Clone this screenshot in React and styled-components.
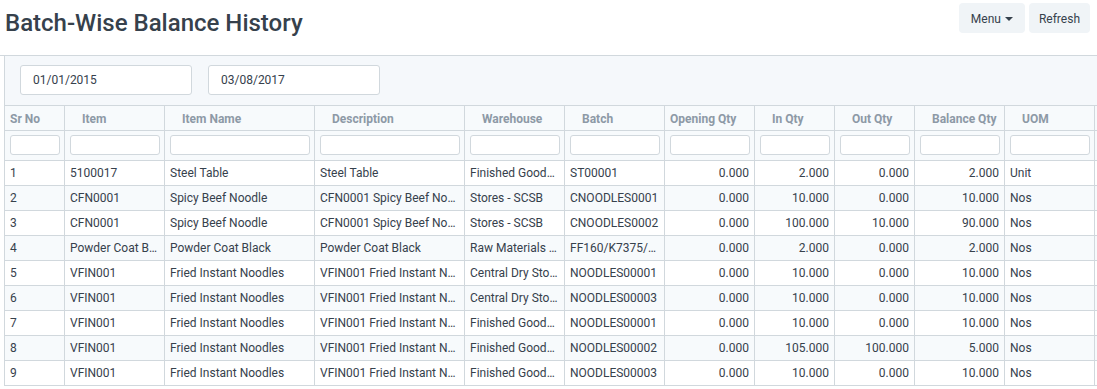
import React from "react";
import styled, { createGlobalStyle } from "styled-components";

const GlobalStyle = createGlobalStyle`
  body {
    margin: 0;
    background: #fff;
    color: #36414c;
    font-family: Roboto, "Liberation Sans", sans-serif;
  }
  * { box-sizing: border-box; }
`;

const PageHead = styled.div`
  display: flex;
  justify-content: space-between;
  align-items: flex-start;
  height: 56px;
  border-bottom: 1px solid #d1d8dd;
`;

const Title = styled.h1`
  margin: 0;
  padding: 7px 0 0 5px;
  font-size: 24px;
  font-weight: 500;
  line-height: 32px;
  color: #36414c;
`;

const Actions = styled.div`
  display: flex;
  gap: 4px;
  padding: 3px 7px 0 0;
`;

const Button = styled.button`
  height: 30px;
  padding: 1px ${(p) => p.$px || 11}px 0;
  border: none;
  border-radius: 4px;
  background: #f0f4f7;
  color: #36414c;
  font-family: inherit;
  font-size: 12px;
  display: flex;
  align-items: center;
  gap: 4px;
`;

const Caret = styled.span`
  width: 0;
  height: 0;
  border-left: 4px solid transparent;
  border-right: 4px solid transparent;
  border-top: 4px solid #36414c;
  margin-top: 1px;
`;

const Body = styled.div`
  margin-left: 4px;
  border-left: 1px solid #d1d8dd;
`;

const FilterBar = styled.div`
  display: flex;
  gap: 16px;
  height: 49px;
  padding: 9px 15px 0;
  background: #f5f8fb;
`;

const DateInput = styled.div`
  width: 172px;
  height: 30px;
  background: #fff;
  border: 1px solid #d1d8dd;
  border-radius: 3px;
  padding: 0 12px;
  font-size: 12px;
  line-height: 29px;
`;

const cols = "60px 100px 150px 150px 100px 100px 90px 80px 80px 90px 90px 1fr";

const Row = styled.div`
  display: grid;
  grid-template-columns: ${cols};
  height: ${(p) => p.$h}px;
  background: ${(p) => p.$bg};
  border-top: ${(p) => (p.$top ? "1px solid #d1d8dd" : "none")};
`;

const Cell = styled.div`
  border-right: 1px solid #d1d8dd;
  border-bottom: 1px solid #d1d8dd;
  font-size: 12px;
  line-height: 25px;
  padding: 0 5px;
  white-space: nowrap;
  overflow: hidden;
  text-overflow: ellipsis;
  text-align: ${(p) => (p.$num ? "right" : "left")};
`;

const HeadCell = styled(Cell)`
  font-weight: 700;
  color: #8d99a6;
  line-height: 26px;
  padding-left: ${(p) => p.$indent}px;
  text-align: left;
`;

const FilterCell = styled(Cell)`
  padding: 4px 4px 0 5px;
`;

const FilterInput = styled.div`
  height: 20px;
  background: #fff;
  border: 1px solid #d1d8dd;
  border-radius: 3px;
`;

const columns = [
  { name: "Sr No", indent: 5 },
  { name: "Item", indent: 17 },
  { name: "Item Name", indent: 17 },
  { name: "Description", indent: 17 },
  { name: "Warehouse", indent: 17 },
  { name: "Batch", indent: 17 },
  { name: "Opening Qty", indent: 5, num: true },
  { name: "In Qty", indent: 17, num: true },
  { name: "Out Qty", indent: 17, num: true },
  { name: "Balance Qty", indent: 17, num: true },
  { name: "UOM", indent: 17 },
];

const rows = [
  ["1", "5100017", "Steel Table", "Steel Table", "Finished Goods - SCSB", "ST00001", "0.000", "2.000", "0.000", "2.000", "Unit"],
  ["2", "CFN0001", "Spicy Beef Noodle", "CFN0001 Spicy Beef Noodle", "Stores - SCSB", "CNOODLES0001", "0.000", "10.000", "0.000", "10.000", "Nos"],
  ["3", "CFN0001", "Spicy Beef Noodle", "CFN0001 Spicy Beef Noodle", "Stores - SCSB", "CNOODLES0002", "0.000", "100.000", "10.000", "90.000", "Nos"],
  ["4", "Powder Coat Black", "Powder Coat Black", "Powder Coat Black", "Raw Materials - SCSB", "FF160/K7375/C01", "0.000", "2.000", "0.000", "2.000", "Nos"],
  ["5", "VFIN001", "Fried Instant Noodles", "VFIN001 Fried Instant Noodles", "Central Dry Store - SCSB", "NOODLES00001", "0.000", "10.000", "0.000", "10.000", "Nos"],
  ["6", "VFIN001", "Fried Instant Noodles", "VFIN001 Fried Instant Noodles", "Central Dry Store - SCSB", "NOODLES00003", "0.000", "10.000", "0.000", "10.000", "Nos"],
  ["7", "VFIN001", "Fried Instant Noodles", "VFIN001 Fried Instant Noodles", "Finished Goods - SCSB", "NOODLES00001", "0.000", "10.000", "0.000", "10.000", "Nos"],
  ["8", "VFIN001", "Fried Instant Noodles", "VFIN001 Fried Instant Noodles", "Finished Goods - SCSB", "NOODLES00002", "0.000", "105.000", "100.000", "5.000", "Nos"],
  ["9", "VFIN001", "Fried Instant Noodles", "VFIN001 Fried Instant Noodles", "Finished Goods - SCSB", "NOODLES00003", "0.000", "10.000", "0.000", "10.000", "Nos"],
];

export default function App() {
  return (
    <>
      <GlobalStyle />
      <PageHead>
        <Title>Batch-Wise Balance History</Title>
        <Actions>
          <Button $px={12}>
            Menu <Caret />
          </Button>
          <Button $px={10}>Refresh</Button>
        </Actions>
      </PageHead>
      <Body>
        <FilterBar>
          <DateInput>01/01/2015</DateInput>
          <DateInput>03/08/2017</DateInput>
        </FilterBar>
        <Row $h={26} $bg="#f7fafc" $top>
          {columns.map((c) => (
            <HeadCell key={c.name} $indent={c.indent}>
              {c.name}
            </HeadCell>
          ))}
          <HeadCell $indent={5} />
        </Row>
        <Row $h={30} $bg="#f7fafc">
          {columns.map((c) => (
            <FilterCell key={c.name}>
              <FilterInput />
            </FilterCell>
          ))}
          <FilterCell />
        </Row>
        {rows.map((r, i) => (
          <Row key={i} $h={25} $bg={i % 2 ? "#f7fafc" : "#fff"}>
            {r.map((v, j) => (
              <Cell key={j} $num={columns[j].num}>
                {v}
              </Cell>
            ))}
            <Cell />
          </Row>
        ))}
      </Body>
    </>
  );
}
